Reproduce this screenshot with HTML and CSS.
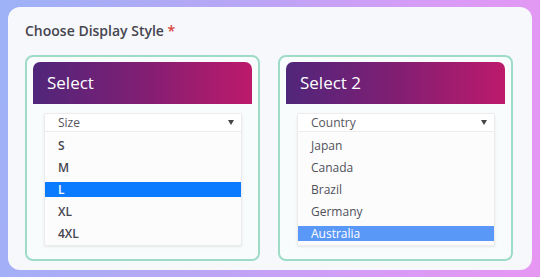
FILE: index.html
```html
<!DOCTYPE html>
<html>
<head>
<meta charset="utf-8">
<link rel="stylesheet" href="styles.css">
</head>
<body>
<div class="card">
  <h1 class="title">Choose Display Style <span class="req">*</span></h1>
  <div class="panels">
    <div class="panel">
      <div class="panel-head">Select</div>
      <div class="panel-body">
        <div class="dropdown">
          <div class="dd-select"><span>Size</span><i class="caret"></i></div>
          <ul class="dd-list bold">
            <li>S</li>
            <li>M</li>
            <li class="active">L</li>
            <li>XL</li>
            <li>4XL</li>
          </ul>
        </div>
      </div>
    </div>
    <div class="panel">
      <div class="panel-head">Select 2</div>
      <div class="panel-body">
        <div class="dropdown">
          <div class="dd-select"><span>Country</span><i class="caret"></i></div>
          <ul class="dd-list">
            <li>Japan</li>
            <li>Canada</li>
            <li>Brazil</li>
            <li>Germany</li>
            <li class="active light">Australia</li>
          </ul>
        </div>
      </div>
    </div>
  </div>
</div>
</body>
</html>
```
FILE: styles.css
```css
html, body {
  margin: 0;
  padding: 0;
}
body {
  width: 540px;
  height: 277px;
  background: linear-gradient(100deg, #9db2f6 0%, #b8a6f6 40%, #d99bf6 75%, #e697f2 100%);
  font-family: "Open Sans", "DejaVu Sans", sans-serif;
  overflow: hidden;
}
.card {
  margin: 7px 0 0 8px;
  width: 524px;
  height: 263px;
  box-sizing: border-box;
  background: #f7f8fb;
  border-radius: 12px;
  padding: 14px 19px 0 17px;
}
.title {
  margin: 0 0 14px 0;
  font-size: 14px;
  line-height: 20px;
  font-weight: 600;
  color: #45454f;
}
.req {
  color: #d9443a;
  font-weight: 600;
}
.panels {
  display: flex;
  gap: 18px;
}
.panel {
  width: 235px;
  box-sizing: border-box;
  border: 2px solid #9fdcc8;
  border-radius: 8px;
  background: #f9fcfc;
  padding: 5px 6px 13px 6px;
}
.panel-head {
  height: 42px;
  box-sizing: border-box;
  background: linear-gradient(90deg, #50267a 0%, #7b1f74 45%, #bd1a6b 100%);
  border-radius: 7px 7px 0 0;
  color: #ffffff;
  font-size: 17px;
  line-height: 42px;
  padding-left: 14px;
  font-weight: 400;
}
.panel-body {
  padding: 9px 10px 0 11px;
}
.dropdown {
  background: #fcfcfd;
  border: 1px solid #ececef;
  border-radius: 2px;
  box-shadow: 0 1px 3px rgba(0, 0, 0, 0.08);
}
.dd-select {
  height: 17px;
  display: flex;
  align-items: center;
  justify-content: space-between;
  padding: 0 7px 0 13px;
  border-bottom: 1px solid #ececef;
  background: #ffffff;
  font-size: 12px;
  color: #555560;
}
.caret {
  width: 0;
  height: 0;
  border-left: 3px solid transparent;
  border-right: 3px solid transparent;
  border-top: 5px solid #444;
}
.dd-list {
  list-style: none;
  margin: 0;
  padding: 6px 0 4px;
  display: flex;
  flex-direction: column;
  gap: 7px;
}
.dd-list li {
  height: 15px;
  line-height: 15px;
  padding-left: 13px;
  font-size: 12px;
  color: #50505a;
}
.dd-list.bold li {
  font-weight: 600;
  color: #45454f;
}
.dd-list li.active {
  background: #0a7bff;
  color: #ffffff;
}
.dd-list li.active.light {
  background: #5a98f7;
}
```
